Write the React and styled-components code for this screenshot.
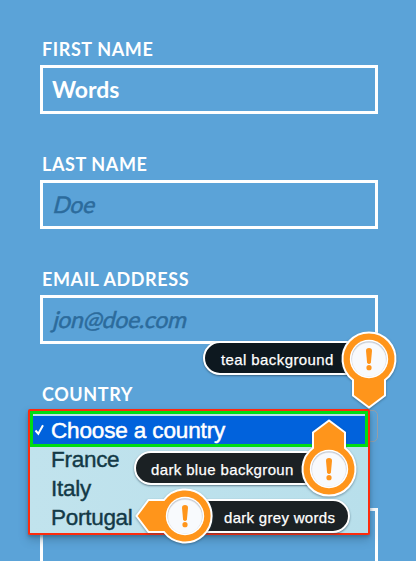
import React from "react";
import styled, { createGlobalStyle } from "styled-components";

const GlobalStyle = createGlobalStyle`
  *, *::before, *::after { box-sizing: border-box; }
  body { margin: 0; background: #5ba3d8; overflow: hidden; }
`;

const Page = styled.main`
  position: relative;
  width: 416px;
  height: 561px;
  overflow: hidden;
  background: #5ba3d8;
`;

const Form = styled.form`
  display: flex;
  flex-direction: column;
  padding: 38px 38px 0 40px;
`;

const Field = styled.div`
  display: flex;
  flex-direction: column;
  height: 115px;
`;

const Label = styled.label`
  height: 27px;
  padding-left: 2px;
  font: 700 18px/23px Lato, sans-serif;
  letter-spacing: 0.6px;
  color: #fff;
  white-space: nowrap;
`;

const Input = styled.div`
  height: 49px;
  padding-left: 9px;
  border: 3px solid #fff;
  font: 700 23px/43px Lato, sans-serif;
  color: #fff;
`;

const Placeholder = styled.span`
  display: inline-block;
  padding-left: 2px;
  font-weight: 400;
  letter-spacing: -0.3px;
  color: #2c6b9c;
  -webkit-text-stroke: 0.5px #2c6b9c;
  transform: skewX(-14deg);
`;

const SelectBox = styled.div`
  width: 338px;
  height: 32px;
  border: 1px solid #9a9fa6;
  border-radius: 5px;
`;

const NextInput = styled(Input)`
  height: 80px;
  margin-top: 10px;
  flex-shrink: 0;
`;

const Menu = styled.div`
  position: absolute;
  left: 28px;
  top: 409px;
  width: 342px;
  height: 126px;
  padding-top: 7px;
  border: 2.5px solid #fd2b0d;
  border-top: 0;
  border-radius: 2px;
  background: linear-gradient(90deg, #c1e3ed, #b8dfeb);
  box-shadow: inset 0 2px #fd2b0d, 0 2px 3px #315f8080, 0 5px 9px #315f8070;
`;

const Selection = styled.div`
  position: absolute;
  left: 30px;
  top: 411px;
  width: 338px;
  height: 36px;
  border: 3px solid #00dc13;
`;

const Option = styled.div`
  position: relative;
  display: flex;
  align-items: center;
  height: 29px;
  padding-left: 21px;
  font: 22.5px/29px "Liberation Sans", Arial, sans-serif;
  letter-spacing: ${(p) => (p.$active ? "-0.14px" : "-0.28px")};
  color: ${(p) => (p.$active ? "#fff" : "#133946")};
  -webkit-text-stroke: ${(p) => (p.$active ? "0.5px #fff" : "0.4px #133946")};
  background: ${(p) => (p.$active ? "#0162dc" : "transparent")};
`;

const Check = styled.svg`
  position: absolute;
  left: 4px;
  top: 7px;
`;

const Pill = styled.div`
  position: absolute;
  left: ${(p) => p.$x}px;
  top: ${(p) => p.$y}px;
  width: ${(p) => p.$w}px;
  height: 34px;
  padding-left: ${(p) => p.$pad}px;
  border: 2px solid #fff;
  border-radius: 17px;
  background: ${(p) => p.$bg || "#1b2124"};
  color: #fff;
  font: 15px/33px "Liberation Sans", Arial, sans-serif;
  letter-spacing: ${(p) => p.$spacing || "0.4px"};
  -webkit-text-stroke: 0.25px #fff;
  white-space: nowrap;
  box-shadow: 0 1px 2px #203b4c99;
`;

const Pin = styled.svg`
  position: absolute;
  left: ${(p) => p.$x - 52}px;
  top: ${(p) => p.$y - 52}px;
  overflow: visible;
  filter: drop-shadow(0 1px 1px #23435880);
`;

function Marker({ x, y, angle = 0 }) {
  return (
    <Pin $x={x} $y={y} width="104" height="104" viewBox="-52 -52 104 104">
      <g transform={`rotate(${angle})`}>
        <path
          d="M-16 21 A26.5 26.5 0 1 1 16 21 V36.5 L0 48.5 L-16 36.5 Z"
          fill="#ff951b"
          stroke="#fff"
          strokeWidth="2"
        />
      </g>
      <circle r="19.2" fill="#fff" />
      <circle cy="-.2" r="17.6" fill="#c6cbd2" />
      <circle cy=".4" r="17.2" fill="#e4e7ec" />
      <circle cy=".8" r="16.8" fill="#f8fafd" />
      <path d="M-3 -8.2 Q-3 -11 0 -11 Q3 -11 3 -8.2 L1.9 3.8 Q0 6.2 -1.9 3.8 Z" fill="#ff951b" />
      <circle cy="8.7" r="2.6" fill="#ff951b" />
    </Pin>
  );
}

export default function App() {
  return (
    <>
      <GlobalStyle />
      <Page>
        <Form>
          <Field>
            <Label>FIRST NAME</Label>
            <Input>Words</Input>
          </Field>
          <Field>
            <Label>LAST NAME</Label>
            <Input>
              <Placeholder>Doe</Placeholder>
            </Input>
          </Field>
          <Field>
            <Label>EMAIL ADDRESS</Label>
            <Input>
              <Placeholder>jon@doe.com</Placeholder>
            </Input>
          </Field>
          <Field>
            <Label>COUNTRY</Label>
            <SelectBox />
          </Field>
          <Field>
            <NextInput />
          </Field>
        </Form>
        <Menu>
          <Option $active>
            <Check width="13" height="15" viewBox="0 0 13 15" fill="none">
              <path d="M1.5 7.5 L4.3 10.7 L9 2.3" stroke="#fff" strokeWidth="2" />
            </Check>
            Choose a country
          </Option>
          <Option>France</Option>
          <Option>Italy</Option>
          <Option>Portugal</Option>
        </Menu>
        <Selection />
        <Pill $x={203} $y={341} $w={160} $pad={16} $bg="#0d181f">teal background</Pill>
        <Pill $x={134} $y={451} $w={190} $pad={15} $spacing="0.36px">dark blue backgroun</Pill>
        <Pill $x={190} $y={499} $w={160} $pad={32} $spacing="0.3px">dark grey words</Pill>
        <Marker x={369.2} y={358.5} />
        <Marker x={329.3} y={468.7} angle={180} />
        <Marker x={185.3} y={516} angle={90} />
      </Page>
    </>
  );
}
